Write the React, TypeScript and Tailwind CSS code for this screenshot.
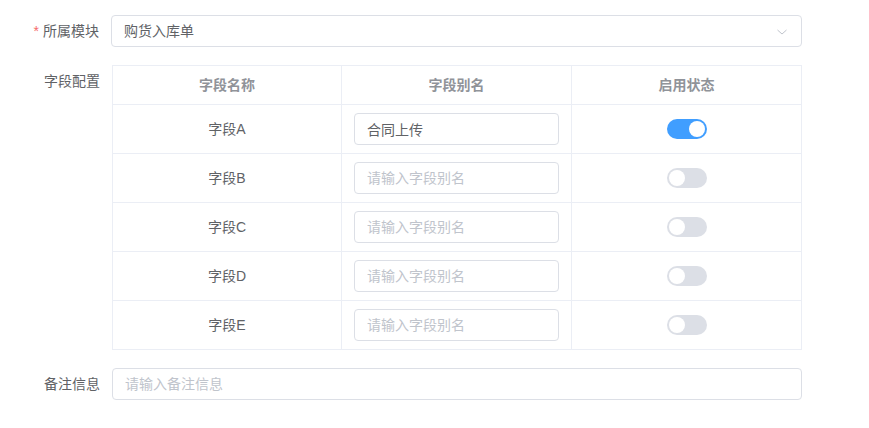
import React, { useState } from "react";

const font = "font-['Liberation_Sans','Noto_Sans_CJK_SC',sans-serif]";

function Switch({ on, onToggle }: { on: boolean; onToggle: () => void }) {
    return (
        <button
            type="button"
            onClick={onToggle}
            className={
                on
                    ? "relative h-5 w-10 rounded-full bg-[#409eff]"
                    : "relative h-5 w-10 rounded-full bg-[#dcdfe6]"
            }
        >
            <span
                className={
                    on
                        ? "absolute top-[2px] left-[22px] h-4 w-4 rounded-full bg-white"
                        : "absolute top-[2px] left-[2px] h-4 w-4 rounded-full bg-white"
                }
            />
        </button>
    );
}

export default function App() {
    const [rows, setRows] = useState([
        { name: "字段A", alias: "合同上传", on: true },
        { name: "字段B", alias: "", on: false },
        { name: "字段C", alias: "", on: false },
        { name: "字段D", alias: "", on: false },
        { name: "字段E", alias: "", on: false },
    ]);

    const toggle = (i: number) =>
        setRows(rows.map((r, j) => (j === i ? { ...r, on: !r.on } : r)));

    const setAlias = (i: number, v: string) =>
        setRows(rows.map((r, j) => (j === i ? { ...r, alias: v } : r)));

    return (
        <div className={`${font} w-[869px] h-[428px] bg-white pt-[15px] text-[14px] text-[#606266]`}>
            {/* 所属模块 */}
            <div className="flex">
                <label className="w-[111px] pr-3 text-right leading-8 shrink-0">
                    <span className="text-[#f56c6c] mr-1">*</span>所属模块
                </label>
                <div className="relative flex h-8 w-[691px] items-center rounded border border-[#dcdfe6] px-3">
                    <span>购货入库单</span>
                    <svg
                        className="absolute right-[13px] top-[10px]"
                        width="12"
                        height="12"
                        viewBox="0 0 12 12"
                        fill="none"
                        stroke="#c0c4cc"
                        strokeWidth="1"
                    >
                        <path d="M1.5 4 L6 8 L10.5 4" />
                    </svg>
                </div>
            </div>

            {/* 字段配置 */}
            <div className="mt-[18px] flex">
                <label className="w-[112px] pr-3 text-right leading-8 shrink-0">字段配置</label>
                <div className="w-[690px] border border-[#ebeef5]">
                    <div className="grid grid-cols-[229px_230px_1fr] border-b border-[#ebeef5] font-bold text-[#909399]">
                        <div className="py-2 text-center leading-[22px] border-r border-[#ebeef5]">字段名称</div>
                        <div className="py-2 text-center leading-[22px] border-r border-[#ebeef5]">字段别名</div>
                        <div className="py-2 text-center leading-[22px]">启用状态</div>
                    </div>
                    {rows.map((r, i) => (
                        <div
                            key={r.name}
                            className={
                                i < rows.length - 1
                                    ? "grid grid-cols-[229px_230px_1fr] border-b border-[#ebeef5]"
                                    : "grid grid-cols-[229px_230px_1fr]"
                            }
                        >
                            <div className="flex items-center justify-center border-r border-[#ebeef5] py-2">
                                {r.name}
                            </div>
                            <div className="border-r border-[#ebeef5] px-3 py-2">
                                <input
                                    className="h-8 w-full rounded border border-[#dcdfe6] px-3 text-[#606266] outline-none placeholder:text-[#c0c4cc]"
                                    placeholder="请输入字段别名"
                                    value={r.alias}
                                    onChange={(e) => setAlias(i, e.target.value)}
                                />
                            </div>
                            <div className="flex items-center justify-center py-2">
                                <Switch on={r.on} onToggle={() => toggle(i)} />
                            </div>
                        </div>
                    ))}
                </div>
            </div>

            {/* 备注信息 */}
            <div className="mt-[18px] flex">
                <label className="w-[112px] pr-3 text-right leading-8 shrink-0">备注信息</label>
                <input
                    className="h-8 w-[690px] rounded border border-[#dcdfe6] px-3 text-[#606266] outline-none placeholder:text-[#c0c4cc]"
                    placeholder="请输入备注信息"
                />
            </div>
        </div>
    );
}
